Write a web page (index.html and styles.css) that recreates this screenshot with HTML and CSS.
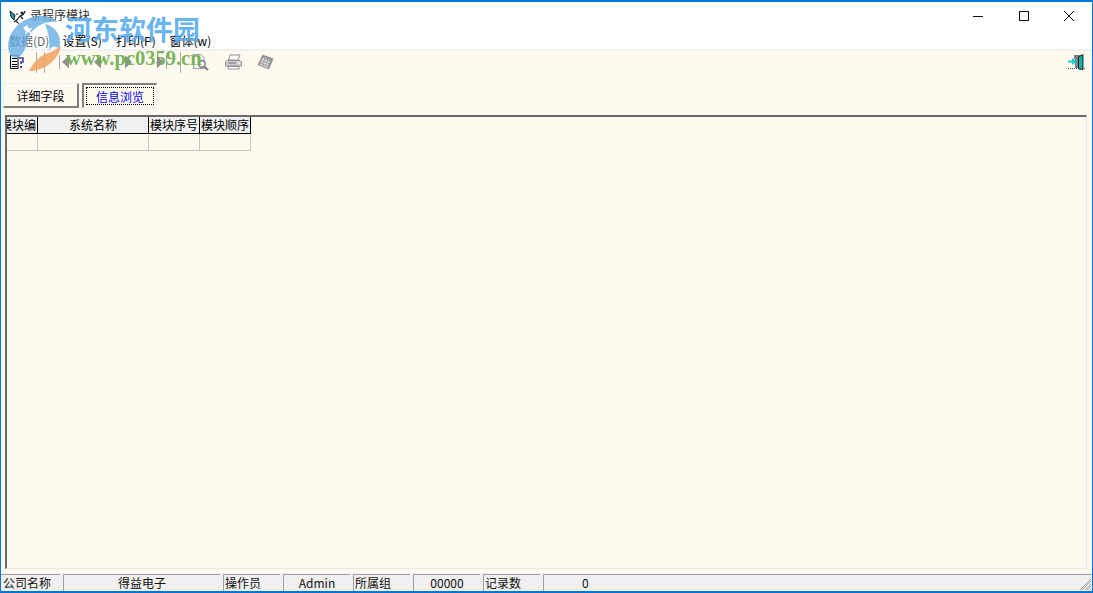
FILE: index.html
```html
<!DOCTYPE html>
<html lang="zh-CN">
<head>
    <meta charset="UTF-8">
    <title>录程序模块</title>
    <link rel="stylesheet" href="styles.css">
</head>
<body>
    <div class="window">
        <!-- 标题栏 -->
        <div class="titlebar">
            <svg class="app-icon" width="18" height="16" viewBox="0 0 18 16">
                <path d="M1,2 L6,6 L5,11 L2,8 Z" fill="#2a9a9a" stroke="#123" stroke-width="1"/>
                <path d="M16,2 Q15,6 11,7 L7,12 L10,15 M11,7 L14,10 M5,13 L9,10" fill="none" stroke="#222" stroke-width="1.2"/>
                <circle cx="13" cy="4" r="1.5" fill="#222"/>
                <circle cx="8" cy="5" r="1" fill="#666"/>
            </svg>
            <span class="title-text">录程序模块</span>
            <div class="win-controls">
                <div class="win-btn">
                    <svg width="10" height="10" viewBox="0 0 10 10"><path d="M0,5.5 H10" stroke="#111" stroke-width="1"/></svg>
                </div>
                <div class="win-btn">
                    <svg width="10" height="10" viewBox="0 0 10 10"><rect x="0.5" y="0.5" width="9" height="9" fill="none" stroke="#111" stroke-width="1"/></svg>
                </div>
                <div class="win-btn">
                    <svg width="10" height="10" viewBox="0 0 10 10"><path d="M0,0 L10,10 M10,0 L0,10" stroke="#111" stroke-width="1"/></svg>
                </div>
            </div>
        </div>

        <!-- 菜单 -->
        <div class="menubar">
            <span class="menu-item">数据(D)</span>
            <span class="menu-item">设置(S)</span>
            <span class="menu-item">打印(P)</span>
            <span class="menu-item">窗体(w)</span>
        </div>

        <div class="content">
            <!-- 工具栏 -->
            <div class="toolbar">
                <div class="tool">
                    <svg width="16" height="16" viewBox="0 0 16 16">
                        <path d="M1.5,1.5 H9 V14.5 H1.5 Z" fill="#fff" stroke="#000"/>
                        <path d="M3,4.5 H8 M3,7.5 H8 M3,10.5 H8 M3,12.5 H8" stroke="#000"/>
                        <path d="M10,4 H14 V8 H12 V10" fill="none" stroke="#4040c0" stroke-width="1.6"/>
                        <rect x="11" y="12" width="2" height="2" fill="#4040c0"/>
                    </svg>
                </div>
                <div class="tool-sep"></div>
                <div class="tool-sep tool-sep-b"></div>
                <div class="tool tool-first">
                    <svg width="12" height="14" viewBox="0 0 12 14"><path d="M1.5,0 V14" stroke="#a8a8a8"/><path d="M11,0.5 V13.5 L4,7 Z" fill="#909090"/></svg>
                </div>
                <div class="tool">
                    <svg width="12" height="14" viewBox="0 0 12 14"><path d="M11,0.5 V13.5 L4,7 Z" fill="#909090"/></svg>
                </div>
                <div class="tool">
                    <svg width="12" height="14" viewBox="0 0 12 14"><path d="M3,0.5 V13.5 L10,7 Z" fill="#909090"/></svg>
                </div>
                <div class="tool">
                    <svg width="14" height="14" viewBox="0 0 14 14"><path d="M4,0.5 V13.5 L10.5,7 Z" fill="#909090"/><path d="M13.5,0 V14" stroke="#a8a8a8"/></svg>
                </div>
                <div class="tool-sep tool-sep-c"></div>
                <div class="tool tool-after-sep">
                    <svg width="16" height="17" viewBox="0 0 16 17">
                        <path d="M0.5,0.5 H8 L11,3.5 V14.5 H0.5 Z" fill="#fffaf0" stroke="#a0a0a0"/>
                        <circle cx="9" cy="10" r="3.2" fill="#fffaf0" stroke="#808080" stroke-width="1.4"/>
                        <path d="M11,12.5 L15,16" stroke="#808080" stroke-width="2.2"/>
                    </svg>
                </div>
                <div class="tool">
                    <svg width="17" height="16" viewBox="0 0 17 16">
                        <path d="M5,1 H15 L13,6 H3.5 Z" fill="#fff" stroke="#909090"/>
                        <path d="M2,6.5 H15 L16.5,8 V12 H0.5 V8 Z" fill="#d0d0d0" stroke="#909090"/>
                        <path d="M3,12.5 H14 V15 H3 Z" fill="#fff" stroke="#909090"/>
                        <path d="M3,9 H11" stroke="#707070"/>
                        <path d="M13,9 H15" stroke="#fff"/>
                    </svg>
                </div>
                <div class="tool">
                    <svg width="17" height="16" viewBox="0 0 17 16">
                        <path d="M5.5,0.5 L16.5,4.5 L12,15.5 L0.5,11 Z" fill="#969696"/>
                        <path d="M4.5,5 L13,8.5 M3.5,7.5 L12,11 M2.5,10 L11,13.5 M7,3.5 L4.5,11 M9.5,4.5 L7,12 M12,5.5 L9.5,13" stroke="#e8e8e8" stroke-width="0.8"/>
                    </svg>
                </div>
                <div class="tool tool-exit">
                    <svg width="17" height="17" viewBox="0 0 17 17">
                        <path d="M6,1 H13 V5 H6 Z" fill="#808080"/>
                        <path d="M7,4 H12 V14 H7 Z" fill="#808080"/>
                        <path d="M10.5,15 V3 L15,0.5 V15.5 Z" fill="#12b0b0" stroke="#000" stroke-width="0.8"/>
                        <path d="M0,6.5 H4 V4 L9,7.5 L4,11 V8.5 H0 Z" fill="#10d0d0"/>
                        <path d="M0,14.5 H17" stroke="#555" stroke-dasharray="1 1"/>
                    </svg>
                </div>
            </div>

            <!-- 标签 -->
            <div class="tabs">
                <div class="tab">详细字段</div>
                <div class="tab tab-active"><span class="tab-focus">信息浏览</span></div>
            </div>

            <!-- 表格 -->
            <div class="grid-panel">
                <div class="grid">
                    <div class="grid-row grid-head">
                        <div class="cell col-a"><span>模块编号</span></div>
                        <div class="cell col-b"><span>系统名称</span></div>
                        <div class="cell col-c"><span>模块序号</span></div>
                        <div class="cell col-c"><span>模块顺序</span></div>
                    </div>
                    <div class="grid-row grid-body">
                        <div class="cell col-a"></div>
                        <div class="cell col-b"></div>
                        <div class="cell col-c"></div>
                        <div class="cell col-c"></div>
                    </div>
                </div>
            </div>
        </div>

        <!-- 状态栏 -->
        <div class="statusbar">
            <div class="st st-label st-first">公司名称</div>
            <div class="st st-company">得益电子</div>
            <div class="st st-label">操作员</div>
            <div class="st st-user">Admin</div>
            <div class="st st-label">所属组</div>
            <div class="st st-group">00000</div>
            <div class="st st-label">记录数</div>
            <div class="st st-count"><span>0</span></div>
            <svg class="grip" width="14" height="14" viewBox="0 0 14 14">
                <path d="M13,2 L2,13 M13,4 L4,13 M13,7 L7,13 M13,9 L9,13 M13,12 L12,13" stroke="#a0a0a0" stroke-width="1"/>
            </svg>
        </div>

        <!-- 水印 -->
        <svg class="wm-logo" width="62" height="62" viewBox="0 0 62 62">
            <ellipse cx="26" cy="26" rx="24" ry="16" fill="#fff" opacity="0.45"/>
            <path d="M6,41 C1,24 18,4 40,5 C46,5 51,7 55,11 C38,9 26,19 23,34 C21,46 10,52 6,41 Z" fill="#6fb3e6"/>
            <path d="M42,13 C52,15 60,25 56,38 C52,34 48,35 46,40 C47,31 46,22 42,13 Z" fill="#6fb3e6"/>
            <path d="M26,60 C41,60 55,50 58,35 C52,39 47,42 42,43 C36,46 30,52 26,60 Z" fill="#f2a35e"/>
            <path d="M24,14 L26,18 L30,16 L27,20 L29,23 L25,21 L22,24 L23,20 L20,17 Z" fill="#fff"/>
        </svg>
        <div class="wm-name">河东软件园</div>
        <div class="wm-url">www.pc0359.cn</div>
    </div>
</body>
</html>
```

FILE: styles.css
```css
* {
    box-sizing: border-box;
}
html, body {
    margin: 0;
    height: 100%;
    overflow: hidden;
}
body {
    font-family: "Noto Sans CJK SC", "Liberation Sans", sans-serif;
    font-size: 12px;
    color: #000;
    background-color: #fff;
}
.window {
    position: relative;
    display: flex;
    flex-direction: column;
    width: 1093px;
    height: 593px;
    border: 1px solid #0078d7;
    border-bottom-width: 2px;
    border-top-width: 2px;
    background-color: #fff;
    overflow: hidden;
}

/* title bar */
.titlebar {
    display: flex;
    align-items: center;
    height: 29px;
    flex: none;
    padding-left: 8px;
}
.app-icon {
    flex: none;
}
.title-text {
    margin-left: 3px;
    line-height: 16px;
    margin-bottom: 3px;
    color: #333;
}
.win-controls {
    display: flex;
    margin-left: auto;
    align-self: flex-start;
}
.win-btn {
    display: flex;
    align-items: center;
    justify-content: center;
    width: 45.5px;
    height: 27px;
}

/* menu */
.menubar {
    display: flex;
    align-items: center;
    height: 20px;
    flex: none;
    padding: 1px 0 0 8px;
    gap: 14.5px;
    border-bottom: 2px solid #f0f0f0;
}
.menu-item {
    line-height: 16px;
    width: 39px;
    white-space: nowrap;
}

/* content */
.content {
    display: flex;
    flex-direction: column;
    flex: 1;
    min-height: 0;
    background-color: #fffaf0;
}
.toolbar {
    display: flex;
    align-items: center;
    height: 22px;
    flex: none;
}
.tool {
    display: flex;
    align-items: center;
    justify-content: center;
    width: 32px;
    height: 22px;
    flex: none;
}
.tool-first {
    margin-left: 3px;
}
.tool-after-sep {
    margin-left: 4px;
}
.tool-sep {
    width: 1px;
    height: 21px;
    flex: none;
    background-color: #b0b0b0;
    margin-left: 3px;
}
.tool-sep-b {
    margin-left: 7px;
}
.tool-sep-c {
    margin-left: 4px;
}
.tool-exit {
    margin-left: auto;
}
.tabs {
    display: flex;
    flex: none;
    gap: 3px;
    margin-top: 10px;
    padding-left: 2px;
}
.tab {
    display: flex;
    align-items: center;
    justify-content: center;
    width: 76px;
    height: 25px;
    background-color: #fffaf0;
    border-top: 1px solid #f0f0f0;
    border-left: 1px solid #f0f0f0;
    border-right: 2px solid #808080;
    border-bottom: 2px solid #808080;
}
.tab-active {
    width: 75px;
    padding: 2px;
    color: #0000ff;
    border-top: 2px solid #808080;
    border-left: 2px solid #808080;
    border-right: 1px solid #f0f0f0;
    border-bottom: 1px solid #f0f0f0;
}
.tab-focus {
    display: flex;
    align-items: center;
    justify-content: center;
    width: 100%;
    height: 100%;
    border: 1px dotted #000;
}

/* grid */
.grid-panel {
    flex: 1;
    min-height: 0;
    margin: 7px 5px 4px 4px;
    border-top: 2px solid #696969;
    border-left: 2px solid #696969;
    border-right: 1px solid #e6e6e6;
    border-bottom: 1px solid #e6e6e6;
}
.grid {
    width: 244px;
}
.grid-row {
    display: flex;
}
.grid-head {
    height: 17px;
}
.grid-head .cell {
    background-color: #f0f0f0;
    border-right: 1px solid #000;
    border-bottom: 1px solid #000;
}
.grid-body {
    height: 17px;
}
.grid-body .cell {
    border-right: 1px solid #c8c8c0;
    border-bottom: 1px solid #c8c8c0;
}
.cell {
    display: flex;
    justify-content: center;
    align-items: center;
    flex: none;
    overflow: hidden;
    white-space: nowrap;
    line-height: 16px;
}
.cell span {
    flex: none;
}
.col-a {
    width: 31px;
    padding-left: 4px;
}
.col-b {
    width: 111px;
}
.col-c {
    width: 51px;
}

/* status bar */
.statusbar {
    display: flex;
    height: 18px;
    flex: none;
    gap: 3px;
    background-color: #f0f0f0;
    padding-top: 1px;
}
.st {
    height: 17px;
    line-height: 16px;
    flex: none;
    white-space: nowrap;
    border-top: 1px solid #a0a0a0;
    border-left: 1px solid #a0a0a0;
    color: #111;
    text-align: center;
    background-color: #f0f0f0;
}
.st-label {
    width: 57px;
    text-align: left;
    padding-left: 1px;
}
.st-first {
    width: 59px;
    border-left: 0;
    padding-left: 2px;
}
.st-company {
    width: 157px;
}
.st-user {
    width: 67px;
}
.st-group {
    width: 67px;
}
.st-count {
    flex: 1;
    text-align: left;
    padding-left: 38px;
}
.grip {
    position: absolute;
    right: 0;
    bottom: 0;
}

/* watermark over the window */
.wm-logo {
    position: absolute;
    left: 2px;
    top: 9px;
    opacity: 0.85;
}
.wm-name {
    position: absolute;
    left: 64px;
    top: 9px;
    font-size: 27px;
    font-weight: 700;
    line-height: 36px;
    white-space: nowrap;
    color: #5aaeee;
    opacity: 0.9;
}
.wm-url {
    position: absolute;
    left: 65px;
    top: 45px;
    font-family: "Liberation Serif", serif;
    font-size: 20.5px;
    font-weight: 700;
    line-height: 22px;
    white-space: nowrap;
    color: #6cae4c;
    opacity: 0.9;
}
```
